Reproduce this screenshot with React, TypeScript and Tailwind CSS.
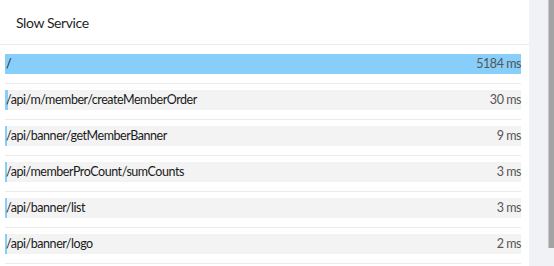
import React from 'react'

type Endpoint = {
  path: string;
  ms: number;
}

const endpoints: Endpoint[] = [
  { path: '/', ms: 5184 },
  { path: '/api/m/member/createMemberOrder', ms: 30 },
  { path: '/api/banner/getMemberBanner', ms: 9 },
  { path: '/api/memberProCount/sumCounts', ms: 3 },
  { path: '/api/banner/list', ms: 3 },
  { path: '/api/banner/logo', ms: 2 },
]

const max = Math.max(...endpoints.map((e) => e.ms))

const Row = ({ item }: { item: Endpoint }) => (
  <div className="border-b border-[#ebebeb] pt-[6px] pb-[9px] first:pt-0">
    <div className="relative h-[20px] bg-[#f3f3f3]">
      <div
        className="absolute left-0 top-0 h-full min-w-[2px] bg-[#87cefa]"
        style={{ width: `${(item.ms / max) * 100}%` }}
      />
      <div className="relative flex h-full items-center justify-between text-[12.5px] leading-none tracking-[-0.45px]">
        <span className="pl-[1px] text-[#1a1a1a]">{item.path}</span>
        <span className="text-[#555]">{item.ms} ms</span>
      </div>
    </div>
  </div>
)

export default function App() {
  return (
    <div className="flex h-[266px] w-[554px] overflow-hidden bg-[#f0f2f5] font-['Lato',sans-serif]">
      <div className="h-full w-[529px] bg-white">
        <div className="flex h-[45px] items-center border-b border-[#ebebeb] px-4 text-[14px] tracking-[-0.4px] text-[#1f1f1f]">
          Slow Service
        </div>
        <div className="pl-[5px] pr-[8px] pt-[9px]">
          {endpoints.map((e) => (
            <Row key={e.path} item={e} />
          ))}
        </div>
      </div>
      <div className="flex-1" />
      <div className="w-[6px] self-start h-[248px] bg-[#a3a3a3] border-l border-[#c8c8c8]" />
    </div>
  )
}
